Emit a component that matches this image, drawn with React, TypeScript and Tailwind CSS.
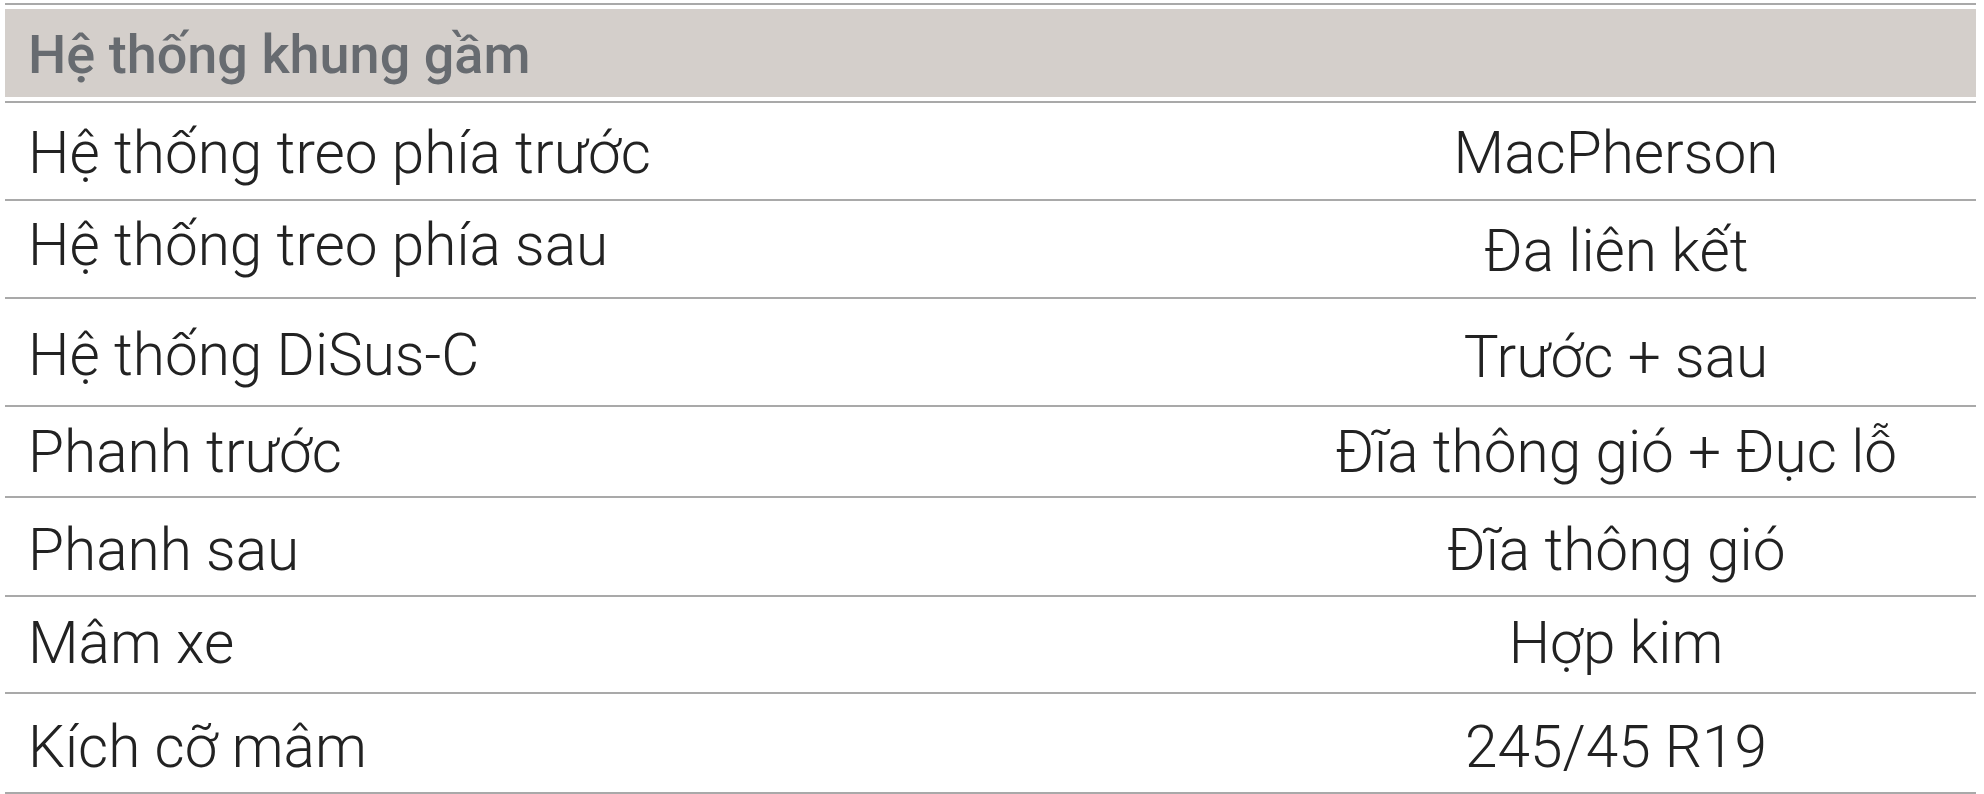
// each row: height is line-to-line pitch; la/va nudge label/value text down
const rows: { label: string; value: string; h: string; la: string; va: string }[] = [
  { label: "Hệ thống treo phía trước", value: "MacPherson", h: "h-[98px]", la: "pt-[6px]", va: "pt-[6px]" },
  { label: "Hệ thống treo phía sau", value: "Đa liên kết", h: "h-[98px]", la: "pb-[6px]", va: "pt-[6px]" },
  { label: "Hệ thống DiSus-C", value: "Trước + sau", h: "h-[108px]", la: "pt-[8px]", va: "pt-[12px]" },
  { label: "Phanh trước", value: "Đĩa thông gió + Đục lỗ", h: "h-[91px]", la: "pt-[2px]", va: "pt-[2px]" },
  { label: "Phanh sau", value: "Đĩa thông gió", h: "h-[99px]", la: "pt-[8px]", va: "pt-[8px]" },
  { label: "Mâm xe", value: "Hợp kim", h: "h-[97px]", la: "pb-[2px]", va: "pb-[2px]" },
  { label: "Kích cỡ mâm", value: "245/45 R19", h: "h-[100px]", la: "pt-[10px]", va: "pt-[10px]" },
];

export default function App() {
  return (
    <div className="min-h-screen bg-white font-['Roboto',sans-serif]">
      <div className="w-[1971px] ml-[5px] pt-[3px]">
        <div className="h-[2px] bg-[#a9a9a9]" />
        <div className="mt-[4px] flex h-[88px] items-center bg-[#d4cfcb] pl-[23px] pt-[2px] text-[54px] font-medium text-[#676b70]">
          Hệ thống khung gầm
        </div>
        <div className="mt-[4px] h-[2px] bg-[#a9a9a9]" />
        {rows.map((r) => (
          <div
            key={r.label}
            className={`flex ${r.h} items-center border-b-2 border-[#a9a9a9] text-[58.5px] font-light text-[#222]`}
          >
            <div className={`flex-1 pl-[23px] ${r.la}`}>{r.label}</div>
            <div className={`w-[720px] text-center ${r.va}`}>{r.value}</div>
          </div>
        ))}
      </div>
    </div>
  );
}
